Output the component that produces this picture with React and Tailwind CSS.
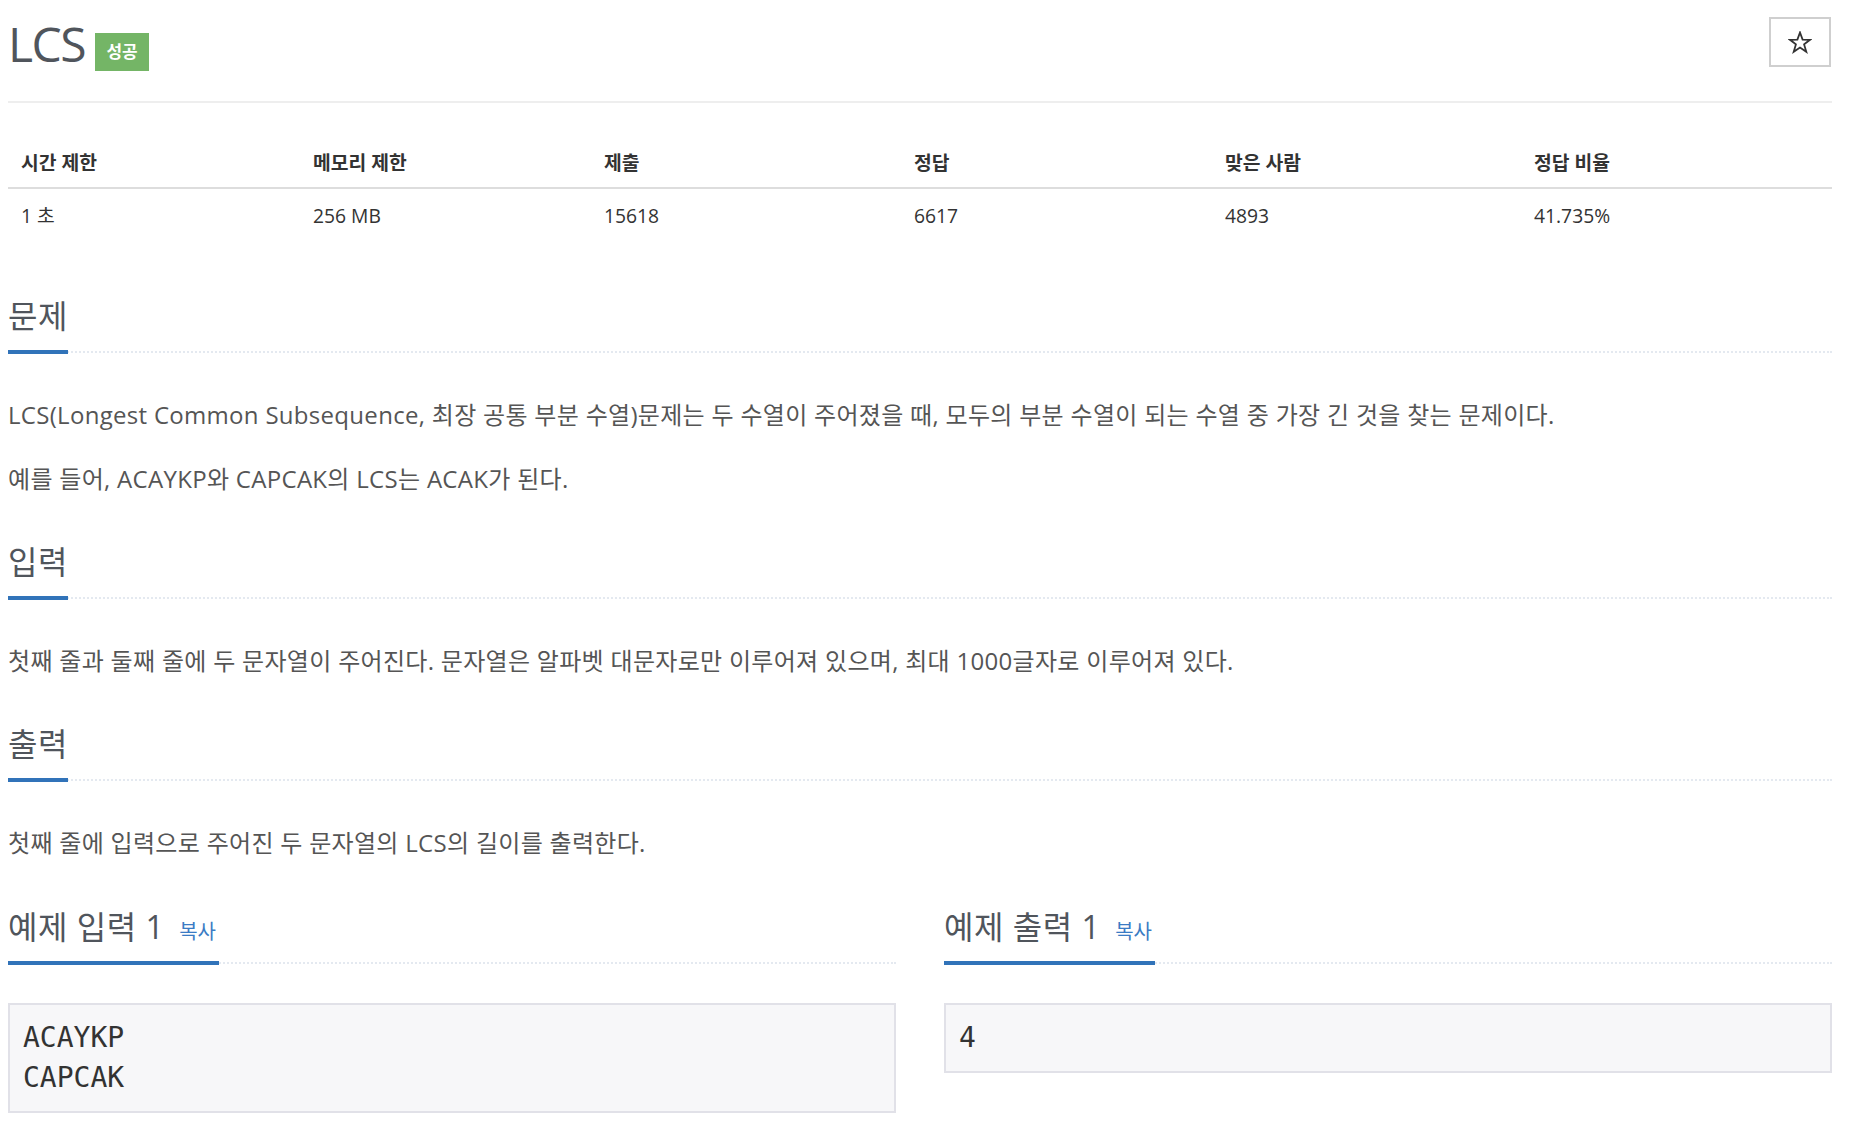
import React from "react";

const stats = [
  ["시간 제한", "1 초"],
  ["메모리 제한", "256 MB"],
  ["제출", "15618"],
  ["정답", "6617"],
  ["맞은 사람", "4893"],
  ["정답 비율", "41.735%"],
];

const Headline = ({ children, className = "" }) => (
  <div className={`flex border-b-2 border-dotted border-[#e4e9f0] ${className}`}>
    <h2 className="mb-[-3px] border-b-4 border-[#3173b9] pb-[14px] text-[32px] font-normal leading-[40px] tracking-[0.5px] text-[#50555c]">
      {children}
    </h2>
  </div>
);

const CopyLink = () => (
  <span className="ml-[15px] pr-[3px] text-[20px] leading-none tracking-normal text-[#3a7bc4]">복사</span>
);

const SampleBox = ({ lines }) => (
  <pre className="mt-[39px] border-2 border-[#e1e1e8] bg-[#f7f7f9] px-[13px] py-[13px] font-['DejaVu_Sans_Mono','Liberation_Mono',monospace] text-[28px] leading-[40px] text-[#333]">
    {lines.join("\n")}
  </pre>
);

const Section = ({ title, children }) => (
  <>
    <Headline className="mt-[43px]">{title}</Headline>
    <div className="mt-[42px] flex flex-col gap-[24px] text-[24px] leading-[40px] tracking-[0.3px] text-[#555]">
      {children}
    </div>
  </>
);

export default function App() {
  return (
    <div className="min-h-[1132px] w-[1850px] bg-white pl-[8px] font-['Open_Sans','Noto_Sans_CJK_KR',sans-serif]">
      <div className="w-[1824px]">
        {/* Page header */}
        <header className="flex h-[103px] items-start justify-between border-b-2 border-[#eee] pt-[17px]">
          <div className="flex items-start">
            <h1 className="text-[48px] font-normal leading-[53px] tracking-[-1.5px] text-[#50555c]">LCS</h1>
            <span className="ml-[10px] mt-[16px] flex h-[38px] w-[54px] items-center justify-center bg-[#74b566] text-[17px] font-bold text-white">
              성공
            </span>
          </div>
          <button className="mr-[1px] flex h-[50px] w-[62px] items-center justify-center border-2 border-[#cfcfcf] bg-white">
            <svg width="24" height="23" viewBox="0 0 24 23" fill="none">
              <polygon
                points="12,1.5 14.6,8.6 22,8.8 16.1,13.4 18.3,20.8 12,16.5 5.7,20.8 7.9,13.4 2,8.8 9.4,8.6"
                stroke="#333"
                strokeWidth="1.8"
                strokeLinejoin="miter"
              />
            </svg>
          </button>
        </header>

        {/* Limits table */}
        <div className="mt-[36px] text-[19.3px] text-[#333]">
          <div className="grid h-[50px] grid-cols-[292px_291px_310px_311px_309px_311px] items-center border-b-2 border-[#ddd]">
            {stats.map(([label]) => (
              <div key={label} className="px-[13px] font-bold">
                {label}
              </div>
            ))}
          </div>
          <div className="grid h-[54px] grid-cols-[292px_291px_310px_311px_309px_311px] items-center">
            {stats.map(([label, value]) => (
              <div key={label} className="px-[13px]">
                {value}
              </div>
            ))}
          </div>
        </div>

        {/* 문제 */}
        <Headline className="mt-[53px]">문제</Headline>
        <div className="mt-[42px] flex flex-col gap-[24px] text-[24px] leading-[40px] tracking-[0.3px] text-[#555]">
          <p>
            LCS(Longest Common Subsequence, 최장 공통 부분 수열)문제는 두 수열이 주어졌을 때, 모두의 부분 수열이 되는 수열 중 가장 긴 것을 찾는 문제이다.
          </p>
          <p>예를 들어, ACAYKP와 CAPCAK의 LCS는 ACAK가 된다.</p>
        </div>

        <Section title="입력">
          <p>
            첫째 줄과 둘째 줄에 두 문자열이 주어진다. 문자열은 알파벳 대문자로만 이루어져 있으며, 최대 1000글자로 이루어져 있다.
          </p>
        </Section>

        <Section title="출력">
          <p>첫째 줄에 입력으로 주어진 두 문자열의 LCS의 길이를 출력한다.</p>
        </Section>

        {/* Samples */}
        <div className="mt-[44px] grid grid-cols-2 gap-[48px]">
          <div>
            <Headline>
              예제 입력 1<CopyLink />
            </Headline>
            <SampleBox lines={["ACAYKP", "CAPCAK"]} />
          </div>
          <div>
            <Headline>
              예제 출력 1<CopyLink />
            </Headline>
            <SampleBox lines={["4"]} />
          </div>
        </div>
      </div>
    </div>
  );
}
